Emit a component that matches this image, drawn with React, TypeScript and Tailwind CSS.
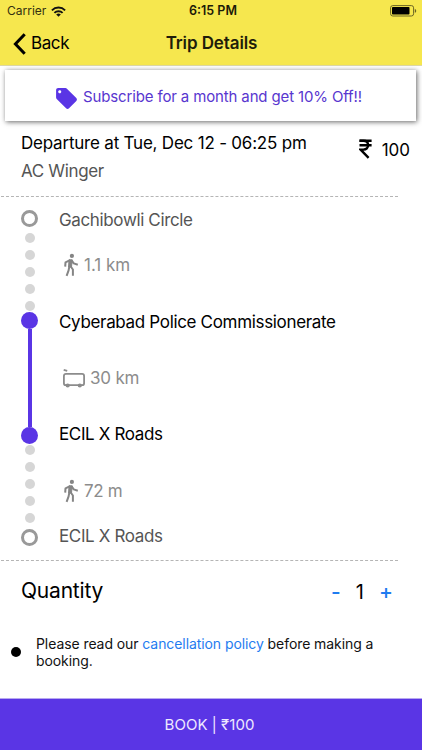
import { useState } from 'react';
import { MdLocalOffer } from 'react-icons/md';

const Dots = () => (
  <div className="flex flex-col items-center gap-[7px]">
    {[0, 1, 2, 3, 4].map((i) => (
      <span key={i} className="h-2.5 w-2.5 rounded-full bg-[#d6d6d6]" />
    ))}
  </div>
);

const Wifi = () => (
  <svg width="15" height="11" viewBox="0 0 15 11" fill="none" stroke="#111" strokeWidth="1.9">
    <path d="M0.9 4.3a9.3 9.3 0 0 1 13.2 0" />
    <path d="M3.4 6.9a5.8 5.8 0 0 1 8.2 0" />
    <path d="M7.5 10.8L5.2 8.5a3.3 3.3 0 0 1 4.6 0z" fill="#111" stroke="none" />
  </svg>
);

const Battery = () => (
  <svg width="27" height="12" viewBox="0 0 27 12">
    <rect x="0.6" y="0.6" width="23" height="10.4" rx="2.2" fill="none" stroke="#6b6524" strokeWidth="1" />
    <rect x="2" y="2" width="17.5" height="7.6" rx="0.8" fill="#000" />
    <path d="M24.8 4v3.8c1-.4 1.4-1 1.4-1.9s-.4-1.5-1.4-1.9z" fill="#6b6524" />
  </svg>
);

const Rupee = () => (
  <svg width="13" height="20" viewBox="0 0 13 20" fill="none" stroke="#000" strokeWidth="2.4">
    <path d="M0.5 1.7H12.6M0.5 6.2H12.6" />
    <path d="M0.5 1.7H4.5c3 0 4.6 1.7 4.6 4.4s-1.7 4.5-4.7 4.5H1.6L9.6 18.8" />
  </svg>
);

const Walk = () => (
  <svg width="16" height="24" viewBox="0 0 16 24" fill="none" stroke="#858585" strokeWidth="2" strokeLinejoin="round">
    <circle cx="8.9" cy="2.9" r="2.1" fill="#858585" stroke="none" />
    <path d="M6 6.8h3.2l-.7 7.2H5.6z" fill="#858585" strokeWidth="1" />
    <path d="M7 7.2L2.5 9.4l-.3 4.2" />
    <path d="M8.6 7.2l2.1 3.2 4.1 1.4" />
    <path d="M6.4 13l-.8 4.4-2 5.4" />
    <path d="M7.4 13l2.5 3.5v6.300" />
  </svg>
);

const Bus = () => (
  <svg width="22" height="19" viewBox="0 0 22 19" fill="none" stroke="#8c8c8c" strokeWidth="1.8">
    <path d="M0.7 0.9L4.2 1.9" />
    <rect x="0.9" y="4.9" width="20.2" height="11.3" rx="2" />
    <circle cx="4.7" cy="16.5" r="2.1" fill="#8c8c8c" stroke="none" />
    <circle cx="16.8" cy="16.5" r="2.1" fill="#8c8c8c" stroke="none" />
  </svg>
);

export default function App() {
  const [quantity, setQuantity] = useState(1);

  return (
    <div className="flex h-[750px] w-[422px] flex-col overflow-hidden bg-white font-['Inter',sans-serif] text-black">
      <header className="h-[66px] shrink-0 border-b border-[#ddd8a4] bg-[#f6e74e]">
        <div className="grid h-[22px] grid-cols-3 items-center pr-[5px] pl-[7px]">
          <div className="flex items-center gap-[5px] text-[12px] text-[#333010]">
            <span>Carrier</span>
            <Wifi />
          </div>
          <span className="pl-[2px] text-center text-[12.5px] font-semibold text-[#1c1a08]">6:15 PM</span>
          <div className="flex justify-end">
            <Battery />
          </div>
        </div>
        <div className="grid h-[43px] grid-cols-3 items-center">
          <button className="flex items-center gap-[5px] pl-[13px] text-[17px] tracking-[-0.4px]">
            <svg width="13" height="22" viewBox="0 0 13 22" fill="none" stroke="#000" strokeWidth="3">
              <path d="M11.7 1.2L2.4 11l9.3 9.8" />
            </svg>
            <span>Back</span>
          </button>
          <h1 className="pl-px text-center text-[17px] font-semibold tracking-[-0.1px] whitespace-nowrap text-[#1f1d0a]">Trip Details</h1>
        </div>
      </header>

      <div className="mt-1 mr-[6px] ml-[5px] flex h-[51px] shrink-0 items-center gap-1 bg-white pl-[49px] text-[#5836cf] shadow-[1px_1px_5px_rgba(0,0,0,0.6)]">
        <MdLocalOffer className="mt-[5px] h-[25px] w-[25px] text-[#5a35e5]" />
        <span className="mt-[3px] text-[15px] tracking-[-0.14px]">Subscribe for a month and get 10% Off!!</span>
      </div>

      <section className="ml-px flex h-[75px] w-[421px] shrink-0 justify-between pt-[11px] pr-3 pl-5">
        <div>
          <p className="text-[17px] leading-[22px] tracking-[-0.21px]">Departure at Tue, Dec 12 - 06:25 pm</p>
          <p className="mt-[6px] text-[17px] leading-[22px] tracking-[-0.35px] text-[#555]">AC Winger</p>
        </div>
        <div className="mt-[5px] flex h-[24px] items-center gap-[10px] text-[17px]">
          <Rupee />
          <span className="mt-[3px]">100</span>
        </div>
      </section>
      <div className="ml-px w-[397px] shrink-0 border-t border-dashed border-[#b5b5b5]" />

      <section className="flex h-[363px] shrink-0 pt-[13px] pl-[21px]">
        <div className="flex w-[17px] flex-col items-center">
          <span className="h-[17px] w-[17px] shrink-0 rounded-full border-3 border-[#999]" />
          <div className="pt-[6px] pb-px"><Dots /></div>
          <span className="h-[17px] w-[17px] shrink-0 rounded-full bg-[#5a35e5]" />
          <span className="h-[98px] w-1 shrink-0 bg-[#5a35e5]" />
          <span className="h-[17px] w-[17px] shrink-0 rounded-full bg-[#5a35e5]" />
          <div className="pt-px"><Dots /></div>
          <span className="mt-[6px] h-[17px] w-[17px] shrink-0 rounded-full border-3 border-[#999]" />
        </div>
        <div className="-mt-px flex flex-col pl-[21px] text-[17px] leading-[22px] tracking-[-0.36px]">
          <p className="text-[#555]">Gachibowli Circle</p>
          <div className="mt-[23px] flex h-[22px] items-center gap-[5px] pl-1 text-[#8c8c8c]">
            <Walk />
            <span className="tracking-normal">1.1 km</span>
          </div>
          <p className="mt-[35px] tracking-[-0.33px]">Cyberabad Police Commissionerate</p>
          <div className="mt-[34px] flex h-[22px] items-center gap-[5px] pl-1 text-[#8c8c8c]">
            <Bus />
            <span className="tracking-[-0.2px]">30 km</span>
          </div>
          <p className="mt-[34px]">ECIL X Roads</p>
          <div className="mt-[35px] flex h-[22px] items-center gap-[5px] pl-1 text-[#8c8c8c]">
            <Walk />
            <span>72 m</span>
          </div>
          <p className="mt-[23px] text-[#555]">ECIL X Roads</p>
        </div>
      </section>
      <div className="ml-px w-[397px] shrink-0 border-t border-dashed border-[#b5b5b5]" />

      <section className="flex h-[59px] shrink-0 items-center justify-between pr-[29px] pl-[21px]">
        <h2 className="text-[21px] tracking-[-0.2px]">Quantity</h2>
        <div className="mt-[2px] flex items-center gap-[15px] text-[20px]">
          <button className="text-[21px] font-medium text-[#1f7cf0]" onClick={() => setQuantity(Math.max(1, quantity - 1))}>-</button>
          <span>{quantity}</span>
          <button className="text-[21px] font-medium text-[#1f7cf0]" onClick={() => setQuantity(quantity + 1)}>+</button>
        </div>
      </section>

      <section className="flex items-center gap-[15px] pt-[15px] pl-[11px]">
        <span className="h-2.5 w-2.5 shrink-0 rounded-full bg-black" />
        <p className="w-[350px] text-[14px] leading-[17px] tracking-[-0.08px] text-[#111]">
          Please read our <a className="text-[#1f7cf0]">cancellation policy</a> before making a booking.
        </p>
      </section>

      <button className="mt-auto h-[52px] shrink-0 border-t border-[#b8a8f0] bg-[#5a35e5] pt-px pr-[3px] text-[15px] tracking-[0.05px] text-[#eee9ff]">
        BOOK | ₹100
      </button>
    </div>
  );
}
